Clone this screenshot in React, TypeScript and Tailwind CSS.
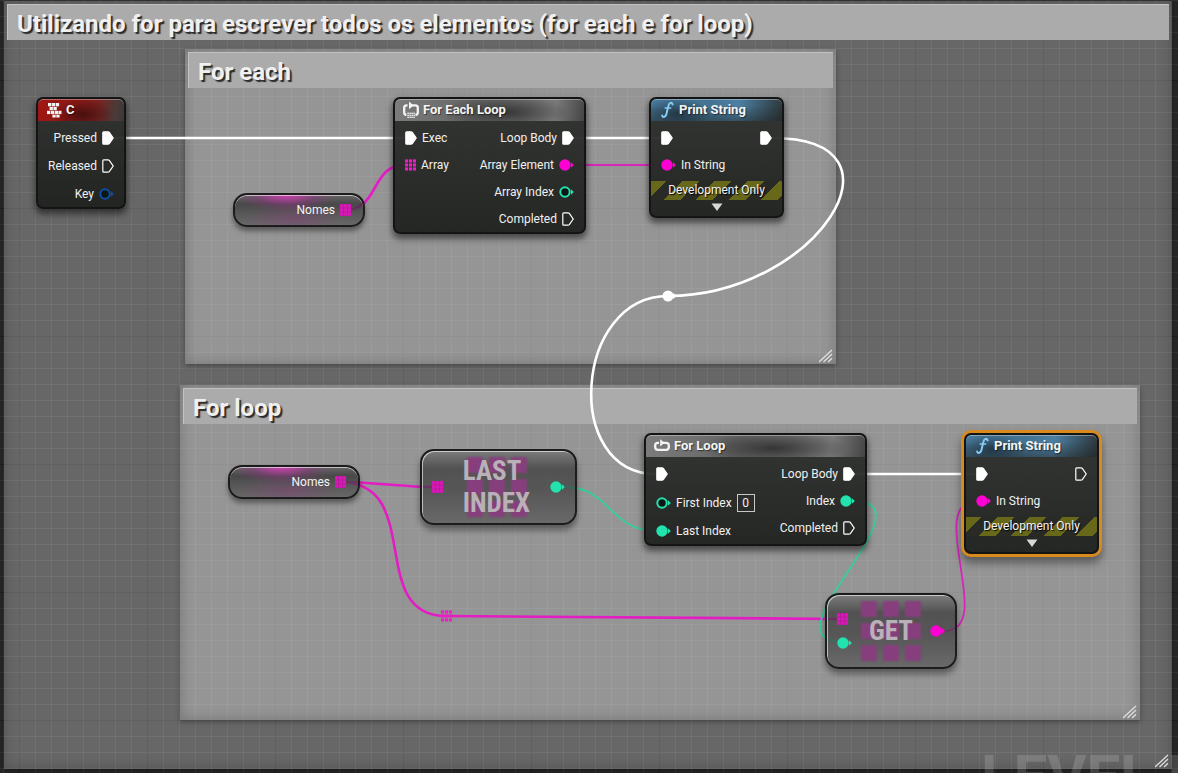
import React from "react";

type PinKind = "exec" | "execOpen" | "dot" | "ring" | "array";

const PINK = "#ff00d4";
const GREEN = "#22e3ae";
const BLUE = "#0b4fa8";

function Pin({ kind, color = "#ffffff", faded = false }: { kind: PinKind; color?: string; faded?: boolean }) {
  if (kind === "exec" || kind === "execOpen") {
    return (
      <svg width="12" height="14" viewBox="0 0 12 14" className="shrink-0" aria-hidden="true">
        <path
          d="M1.7 0.8 H6 Q6.8 0.8 7.3 1.4 L11.2 7 L7.3 12.6 Q6.8 13.2 6 13.2 H1.7 Q0.8 13.2 0.8 12.3 V1.7 Q0.8 0.8 1.7 0.8 Z"
          fill={kind === "exec" ? "#ffffff" : "none"}
          stroke="#ffffff"
          strokeWidth="1.2"
        />
      </svg>
    );
  }
  if (kind === "array") {
    return (
      <svg width="11" height="12" viewBox="0 0 11 12" className="shrink-0" aria-hidden="true">
        {faded && <rect x="0" y="0" width="11" height="12" fill="#b81a9d" />}
        {[0, 1, 2].map((r) =>
          [0, 1, 2].map((c) => (
            <rect key={`${r}${c}`} x={c * 4} y={r * 4 + 0.4} width="3.1" height="3.1" fill={faded ? "#d51ab5" : "#f01cc9"} />
          )),
        )}
      </svg>
    );
  }
  return (
    <svg width="15" height="12" viewBox="0 0 15 12" className="shrink-0" aria-hidden="true">
      {kind === "dot" ? (
        <circle cx="6" cy="6" r="5.7" fill={color} />
      ) : (
        <circle cx="6" cy="6" r="4.7" fill="#0c1614" stroke={color} strokeWidth="2" />
      )}
      <path d="M12 3.2 L14.9 6 L12 8.8 Z" fill={color} />
    </svg>
  );
}

function Row({ label, children, out = false, tall = false }: { label?: string; children: React.ReactNode; out?: boolean; tall?: boolean }) {
  return (
    <div className={`flex items-center gap-[5px] ${tall ? "h-7" : "h-[27px]"} ${out ? "flex-row-reverse" : ""}`}>
      {children}
      {label && <span className="whitespace-nowrap text-[12px] leading-4 text-[#f0f0f0]">{label}</span>}
    </div>
  );
}

function Node({
  place,
  header,
  title,
  icon,
  selected = false,
  children,
}: {
  place: string;
  header: string;
  title: string;
  icon: React.ReactNode;
  selected?: boolean;
  children: React.ReactNode;
}) {
  return (
    <section
      className={`absolute overflow-hidden rounded-[7px] border-2 border-[#131413] bg-gradient-to-b from-[#2f312f]/95 to-[#1f211f]/95 ${
        selected
          ? "shadow-[0_0_0_3px_#d98a1c,0_6px_8px_3px_rgba(0,0,0,0.4)]"
          : "shadow-[0_4px_6px_1px_rgba(0,0,0,0.5)]"
      } ${place}`}
    >
      <h3
        className={`flex h-[22px] items-center gap-1 rounded-t-[5px] pl-2 text-[13px] font-bold leading-4 text-[#f4f4f4] shadow-[inset_0_1px_0_rgba(255,255,255,0.35)] [text-shadow:1px_1px_1px_rgba(0,0,0,0.5)] ${header}`}
      >
        {icon}
        {title}
      </h3>
      {children}
    </section>
  );
}

function KeyboardIcon() {
  return (
    <svg width="16" height="16" viewBox="0 0 16 16" fill="#f4f4f4" aria-hidden="true">
      <rect x="2" y="1" width="3.3" height="3.3" /><rect x="5.9" y="1" width="3.3" height="3.3" /><rect x="9.8" y="1" width="3.3" height="3.3" />
      <rect x="3.6" y="4.9" width="3.3" height="3.3" /><rect x="7.5" y="4.9" width="3.3" height="3.3" />
      <rect x="1" y="8.8" width="3.3" height="3.3" /><rect x="4.9" y="8.8" width="3.3" height="3.3" /><rect x="8.8" y="8.8" width="3.3" height="3.3" /><rect x="12.5" y="8.8" width="3" height="3.3" />
      <rect x="6.4" y="12.7" width="3.3" height="2.8" /><rect x="10.3" y="12.7" width="3.3" height="2.8" />
    </svg>
  );
}

function LoopIcon({ each = false }: { each?: boolean }) {
  return (
    <svg width="16" height="18" viewBox="1 0 16 18" aria-hidden="true">
      <path
        d={
          each
            ? "M5.5 4.4 H4.6 Q2.2 4.4 2.2 6.8 V11.4 Q2.2 13.6 4.4 14 M13.4 14 Q15.8 13.6 15.8 11.4 V6.8 Q15.8 4.4 13.4 4.4 H9.5"
            : "M6 5.8 H5 Q2.2 5.8 2.2 8.3 V10.3 Q2.2 12.8 5 12.8 H13 Q15.8 12.8 15.8 10.3 V8.3 Q15.8 5.8 13 5.8 H10"
        }
        fill="none"
        stroke="#f4f4f4"
        strokeWidth="2.3"
      />
      <path d={each ? "M7 0.6 L11.6 4.4 L7 8.2 Z" : "M7.2 2.2 L11.6 5.8 L7.2 9.4 Z"} fill="#f4f4f4" />
      {each &&
        [0, 1, 2].map((r) =>
          [0, 1, 2, 3].map((c) => <rect key={`${r}${c}`} x={5.4 + c * 2} y={11.6 + r * 2} width="1.4" height="1.4" fill="#f4f4f4" />),
        )}
    </svg>
  );
}

function FunctionIcon() {
  return (
    <svg width="16" height="18" viewBox="1 0 16 18" fill="none" stroke="#86cdf6" aria-hidden="true">
      <path d="M14.6 3.4 Q14 1.5 12.4 1.9 Q10.8 2.4 10.2 5.4 L8.6 12.4 Q7.8 16 5.8 16 Q4.4 16 4.2 14.6" strokeWidth="2" strokeLinecap="round" />
      <path d="M6.6 7 H13.2" strokeWidth="1.6" />
    </svg>
  );
}

const GRAY_HEADER =
  "bg-[radial-gradient(ellipse_34%_75%_at_58%_60%,rgba(35,35,35,0.75),transparent),linear-gradient(100deg,#7c7c7c_0%,#666666_40%,#707070_68%,#7a7a7a_84%,#444444_100%)]";
const BLUE_HEADER =
  "bg-[radial-gradient(ellipse_26%_70%_at_20%_65%,rgba(25,38,48,0.7),transparent),linear-gradient(rgba(0,0,0,0)_30%,rgba(30,32,32,0.45)_100%),linear-gradient(100deg,#47789a_0%,#457492_45%,#4c7fa3_66%,#3c5b6e_82%,#2c3437_100%)]";
const RED_HEADER =
  "bg-[radial-gradient(ellipse_36%_70%_at_52%_70%,rgba(45,10,10,0.7),transparent),linear-gradient(100deg,#a01714_0%,#8e1815_40%,#7d2220_68%,#4b3a38_88%,#3a3a38_100%)]";

function PrintString({ place, selected = false }: { place: string; selected?: boolean }) {
  return (
    <Node place={place} title="Print String" header={BLUE_HEADER} icon={<FunctionIcon />} selected={selected}>
      <div className="flex justify-between px-[10px] pt-[3px]">
        <div>
          <Row><Pin kind="exec" /></Row>
          <Row label="In String"><Pin kind="dot" color={PINK} /></Row>
        </div>
        <Row out><Pin kind={selected ? "execOpen" : "exec"} /></Row>
      </div>
      <p className="mt-[3px] h-[19px] bg-[repeating-linear-gradient(135deg,#68681a_0px,#68681a_11px,#292a25_11px,#292a25_22px,#68681a_22px,#68681a_23px)] text-center text-[12px] leading-[18px] text-[#f4f4f4] [text-shadow:1px_1px_1px_#000]">
        Development Only
      </p>
      <button type="button" aria-label="Expand node" className="mx-auto mt-[3px] mb-[5px] block h-2 w-3">
        <svg width="12" height="8" viewBox="0 0 12 8" aria-hidden="true"><path d="M0.5 0.5 H11.5 L6 8 Z" fill="#d8d8d8" /></svg>
      </button>
    </Node>
  );
}

function Comment({ place, title }: { place: string; title: string }) {
  return (
    <section
      className={`absolute flex flex-col bg-white/30 px-[3px] pt-[3px] pb-px shadow-[inset_0_0_14px_rgba(0,0,0,0.22),0_2px_5px_rgba(0,0,0,0.3)] ${place}`}
    >
      <h2 className="h-9 truncate bg-[#ababab] pl-[10px] text-[24px] font-bold leading-10 text-[#f0f0f0] shadow-[inset_1px_1px_0_#c2c2c2] [text-shadow:2px_2px_1px_#2a2a2a]">
        {title}
      </h2>
      <svg width="14" height="14" viewBox="0 0 14 14" className="mt-auto self-end" stroke="#dedede" strokeWidth="1.3" aria-hidden="true">
        <path d="M0 13 L13 1 M4.5 13 L13 5 M9 13 L13 9.2" />
      </svg>
    </section>
  );
}

function Variable({ place }: { place: string }) {
  return (
    <div
      className={`absolute flex h-[34px] w-[132px] items-center justify-end gap-[5px] rounded-[14px] border-2 border-[#1c1c1c] bg-[radial-gradient(ellipse_50px_16px_at_40%_0%,rgba(215,60,185,0.9),rgba(150,50,135,0.4)_60%,transparent),radial-gradient(ellipse_50px_14px_at_45%_80%,rgba(150,50,130,0.35),transparent),linear-gradient(rgba(90,90,90,0.8)_0%,rgba(48,46,48,0.75)_30%,rgba(66,66,66,0.75)_60%,rgba(88,88,88,0.75)_100%)] pr-3 text-[12px] text-[#f4f4f4] shadow-[inset_0_1px_0_rgba(255,255,255,0.6),0_4px_5px_rgba(0,0,0,0.4)] ${place}`}
    >
      <span className="leading-4">Nomes</span>
      <Pin kind="array" faded />
    </div>
  );
}

function Compact({ place, title, output, inputs }: { place: string; title: string; output: string; inputs: React.ReactNode }) {
  return (
    <div
      className={`absolute flex h-[76px] items-center justify-between rounded-[14px] border-2 border-[#1c1c1c] bg-[linear-gradient(rgba(120,120,120,0.85)_0%,rgba(56,56,56,0.72)_24%,rgba(62,62,62,0.72)_55%,rgba(88,88,88,0.72)_100%)] px-[10px] shadow-[inset_1px_1px_0_rgba(255,255,255,0.6),0_5px_6px_rgba(0,0,0,0.4)] ${place}`}
    >
      <div className="flex flex-col gap-3">{inputs}</div>
      <div className="relative flex h-16 items-center">
        <svg width="64" height="64" viewBox="0 0 64 64" className="absolute top-0 left-1/2 max-w-none -translate-x-1/2 blur-[1px]" aria-hidden="true">
          {[0, 1, 2].map((r) =>
            [0, 1, 2].map((c) => <rect key={`${r}${c}`} x={2 + c * 22} y={2 + r * 22} width="16" height="16" rx="1" fill="#863f7c" />),
          )}
        </svg>
        <h3 className="relative font-['Roboto_Condensed','Liberation_Sans_Narrow',Roboto,sans-serif] text-[27px] font-bold leading-8 text-[#b9b0b8]">
          {title.split(" ").map((word) => (
            <span key={word} className="block">{word}</span>
          ))}
        </h3>
      </div>
      <Pin kind="dot" color={output} />
    </div>
  );
}

function Wires() {
  return (
    <svg className="absolute top-0 left-0 h-[773px] w-[1178px]" viewBox="0 0 1178 773" fill="none" aria-hidden="true">
      <g stroke="#ffffff" strokeWidth="2.6">
        <path d="M114 138 H406" />
        <path d="M573 138 H662" />
        <path d="M772 138 C919 138 815 296 668 296" />
        <path d="M668 296 C574 296 562 474 656 474" />
        <path d="M854 474 H977" />
      </g>
      <g stroke="#e41cc3" strokeWidth="2.6">
        <path d="M345 210 C380 210 370 165 405 165" />
        <path d="M340 482 C375 482 400 487 437 487" />
        <path d="M340 482 C425 482 366 616 446 616" />
        <path d="M446 616 L842 619" />
      </g>
      <g stroke="#d825bb" strokeWidth="1.8">
        <path d="M573 165 H662" />
        <path d="M944 631 C998 631 923 501 977 501" />
      </g>
      <g stroke="#35cf9f" strokeWidth="1.8">
        <path d="M565 487 C610 487 610 531 656 531" />
        <path d="M853 501 C936 501 760 642 843 642" />
      </g>
      <circle cx="668" cy="296" r="5.5" fill="#ffffff" />
      <path d="M673 293 L677 296 L673 299 Z" fill="#ffffff" />
    </svg>
  );
}

export default function App() {
  return (
    <main className="relative min-h-screen overflow-hidden bg-[#262626] font-['Roboto','Liberation_Sans',sans-serif]">
      <div className="absolute inset-0 bg-[linear-gradient(90deg,rgba(0,0,0,0.45)_1px,transparent_1px),linear-gradient(rgba(0,0,0,0.45)_1px,transparent_1px),linear-gradient(90deg,rgba(255,255,255,0.06)_1px,transparent_1px),linear-gradient(rgba(255,255,255,0.06)_1px,transparent_1px)] bg-[size:128px_128px,128px_128px,16px_16px,16px_16px] bg-[position:19px_80px,19px_80px,3px_0px,3px_0px]" />

      <Comment place="top-px right-[6px] left-1 h-[768px]" title="Utilizando for para escrever todos os elementos (for each e for loop)" />
      <Comment place="top-[49px] left-[185px] h-[315px] w-[651px]" title="For each" />
      <Comment place="top-[385px] left-[180px] h-[335px] w-[960px]" title="For loop" />
      <p className="absolute top-[747px] left-[981px] whitespace-nowrap text-[60px] font-bold leading-[60px] text-white/15">LEVEL B</p>

      <Wires />

      <Node place="top-[97px] left-[36px] w-[90px]" title="C" header={RED_HEADER} icon={<KeyboardIcon />}>
        <div className="px-[10px] pt-[3px]">
          <Row label="Pressed" out tall><Pin kind="exec" /></Row>
          <Row label="Released" out tall><Pin kind="execOpen" /></Row>
          <Row label="Key" out><Pin kind="ring" color={BLUE} /></Row>
        </div>
      </Node>

      <Node place="top-[97px] left-[393px] w-[193px]" title="For Each Loop" header={GRAY_HEADER} icon={<LoopIcon each />}>
        <div className="flex justify-between px-[10px] pt-[3px]">
          <div>
            <Row label="Exec"><Pin kind="exec" /></Row>
            <Row label="Array"><Pin kind="array" /></Row>
          </div>
          <div>
            <Row label="Loop Body" out><Pin kind="exec" /></Row>
            <Row label="Array Element" out><Pin kind="dot" color={PINK} /></Row>
            <Row label="Array Index" out><Pin kind="ring" color={GREEN} /></Row>
            <Row label="Completed" out><Pin kind="execOpen" /></Row>
          </div>
        </div>
      </Node>

      <PrintString place="top-[97px] left-[649px] w-[135px]" />

      <Node place="top-[433px] left-[644px] w-[223px]" title="For Loop" header={GRAY_HEADER} icon={<LoopIcon />}>
        <div className="flex justify-between px-[10px] pt-[3px]">
          <div>
            <Row tall><Pin kind="exec" /></Row>
            <label className="flex h-[29px] items-center gap-[5px] text-[12px] text-[#f0f0f0]">
              <Pin kind="ring" color={GREEN} />
              First Index
              <input defaultValue="0" className="h-[18px] w-[18px] border border-[#c8c8c8] bg-transparent text-center text-[12px] leading-4 text-[#f0f0f0] outline-none" />
            </label>
            <Row label="Last Index" out={false}><Pin kind="dot" color={GREEN} /></Row>
          </div>
          <div>
            <Row label="Loop Body" out><Pin kind="exec" /></Row>
            <Row label="Index" out><Pin kind="dot" color={GREEN} /></Row>
            <Row label="Completed" out><Pin kind="execOpen" /></Row>
          </div>
        </div>
      </Node>

      <PrintString place="top-[433px] left-[964px] w-[135px]" selected />

      <Variable place="top-[193px] left-[233px]" />
      <Variable place="top-[465px] left-[228px]" />

      <Compact place="top-[449px] left-[420px] w-[157px]" title="LAST INDEX" output={GREEN} inputs={<Pin kind="array" faded />} />
      <Compact
        place="top-[593px] left-[825px] w-[132px]"
        title="GET"
        output={PINK}
        inputs={
          <>
            <Pin kind="array" faded />
            <Pin kind="dot" color={GREEN} />
          </>
        }
      />
      <div className="absolute top-[610px] left-[441px]"><Pin kind="array" /></div>
    </main>
  );
}
